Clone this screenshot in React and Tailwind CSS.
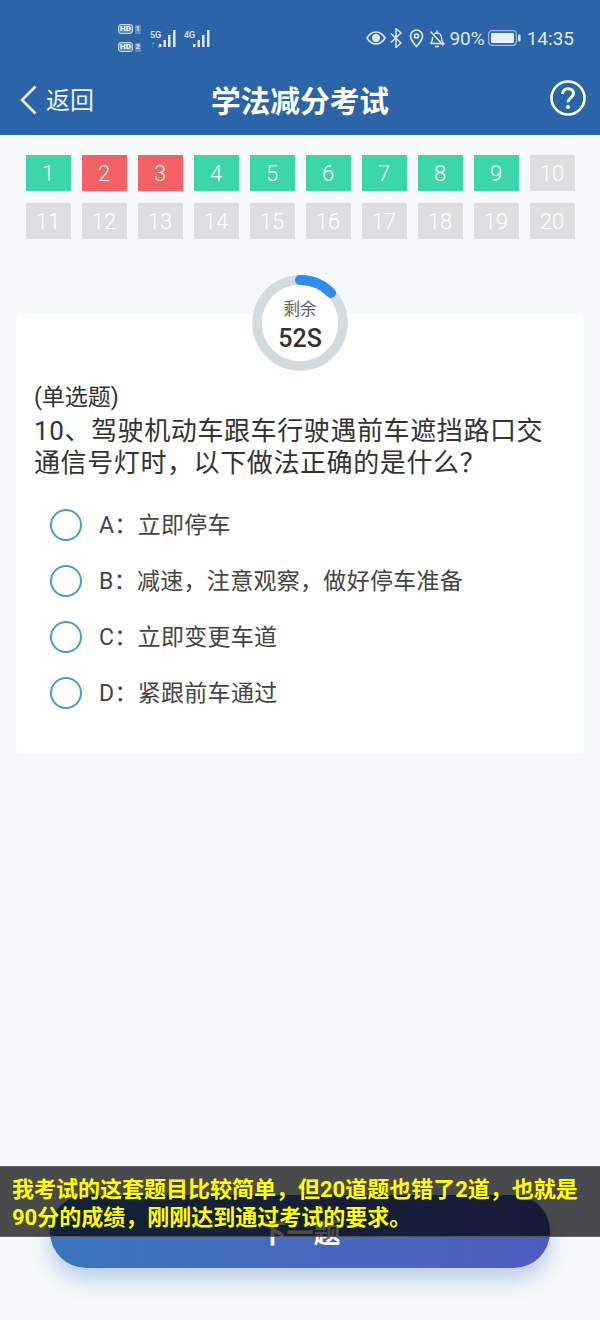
import React from "react";

const font = { fontFamily: '"Roboto", "Noto Sans CJK SC", sans-serif' };

const cells = [
  "ok", "bad", "bad", "ok", "ok", "ok", "ok", "ok", "ok", "idle",
  "idle", "idle", "idle", "idle", "idle", "idle", "idle", "idle", "idle", "idle",
];

const cellColors = {
  ok: "bg-[#3cd6ab]",
  bad: "bg-[#f46164]",
  idle: "bg-[#dbdfe0]",
};

const options = [
  ["A", "立即停车"],
  ["B", "减速，注意观察，做好停车准备"],
  ["C", "立即变更车道"],
  ["D", "紧跟前车通过"],
];

function Signal({ label, extra }) {
  return (
    <div className="relative h-[19px] w-[28px]">
      <span className="absolute left-0 top-0 text-[9px] font-medium leading-[10px] text-[#dfe8f3]">{label}</span>
      {extra && <span className="absolute left-0 top-[11px] text-[6px] leading-[8px] text-[#8fb0d6]">{extra}</span>}
      <svg width="19" height="19" viewBox="0 0 19 19" className="absolute right-0 top-0">
        <g fill="#dfe8f3">
          <rect x="0" y="14" width="2.500" height="3" />
          <rect x="4.500" y="10" width="2.500" height="7" />
          <rect x="9" y="5" width="2.500" height="12" />
          <rect x="14" y="0" width="2.500" height="17" />
        </g>
      </svg>
    </div>
  );
}

function HdBadge({ n }) {
  return (
    <div className="flex items-center gap-[2px]">
      <span className="rounded-[3px] border border-[#cfdcee] bg-[#5f8bc0] px-[1px] text-[8px] font-bold leading-[8px] text-white">HD</span>
      <span className="rounded-[1px] bg-[#5f8bc0] px-[1px] text-[7px] font-bold leading-[9px] text-[#e6edf6]">{n}</span>
    </div>
  );
}

function StatusBar() {
  return (
    <div className="flex h-[76px] items-center justify-between pl-[118px] pr-[26px] text-[#dfe8f3]">
      <div className="flex items-center gap-[9px]">
        <div className="flex flex-col gap-[8px]">
          <HdBadge n="1" />
          <HdBadge n="2" />
        </div>
        <div className="flex items-center gap-[6px] pt-[2px]">
          <Signal label="5G" extra="↑↓" />
          <Signal label="4G" />
        </div>
      </div>
      <div className="flex items-center text-[19px] leading-none">
        <svg width="20" height="16" viewBox="0 0 20 16" fill="none" stroke="currentColor" strokeWidth="1.6">
          <path d="M1 8c2.400-4 5.400-6 9-6s6.600 2 9 6c-2.400 4-5.400 6-9 6s-6.600-2-9-6z" />
          <circle cx="10" cy="8" r="3.200" fill="currentColor" />
        </svg>
        <svg width="12" height="20" viewBox="0 0 12 20" fill="none" stroke="currentColor" strokeWidth="1.500" className="ml-[4px]">
          <path d="M1 5.500l10 9.500-5 4.500V.5l5 4.500L1 14.500" />
        </svg>
        <svg width="15" height="19" viewBox="0 0 15 19" fill="none" stroke="currentColor" strokeWidth="1.700" className="ml-[7px]">
          <path d="M7.500 17.500C3.500 13 1.500 10 1.500 7a6 6 0 0 1 12 0c0 3-2 6-6 10.500z" />
          <circle cx="7.500" cy="7" r="2" />
        </svg>
        <svg width="16" height="19" viewBox="0 0 16 19" fill="none" stroke="currentColor" strokeWidth="1.500" className="ml-[5px]">
          <path d="M1.500 14.500h13c-1.500-1.500-2-3-2-5.500 0-2.800-1.800-5-4.500-5-1 0-2 .3-2.700.9M3.800 8c-.2.5-.3 1-.3 1.500 0 2.200-.7 3.700-2 5" />
          <path d="M8 1.500V4M6 17.500h4M1.500 2.500l13 14" />
        </svg>
        <span className="ml-[4px]">90%</span>
        <svg width="33" height="18" viewBox="0 0 33 18" className="ml-[3px]">
          <rect x="0.700" y="1.700" width="27.600" height="14.600" rx="3" fill="none" stroke="#9fbbdc" strokeWidth="1.200" />
          <rect x="3" y="4" width="23" height="10" rx="1" fill="#e8eff8" />
          <rect x="30" y="5.500" width="2.500" height="7" rx="1" fill="#dfe8f3" />
        </svg>
        <span className="ml-[6px]">14:35</span>
      </div>
    </div>
  );
}

function NavBar() {
  return (
    <div className="relative flex h-[48px] items-center justify-between pl-[20px] pr-[14px]">
      <div className="flex items-center gap-[9px] text-[#eef3f9]">
        <svg width="17" height="30" viewBox="0 0 17 30" fill="none" stroke="currentColor" strokeWidth="2.600">
          <path d="M15.500 1.500L2 15l13.500 13.500" />
        </svg>
        <span className="pt-[2px] text-[24px] leading-none">返回</span>
      </div>
      <span className="absolute inset-x-0 top-[11px] text-center text-[29.700px] font-bold leading-none text-white">学法减分考试</span>
      <svg width="36" height="36" viewBox="0 0 36 36" fill="none" stroke="#fff" strokeWidth="2.600" className="relative -top-[2px]">
        <circle cx="18" cy="18" r="16.500" />
        <path d="M12.500 14c0-3.200 2.400-5.300 5.600-5.300s5.400 2 5.400 4.800c0 4.500-5.500 4.300-5.500 8.700" strokeWidth="3" />
        <circle cx="18" cy="27" r="2" fill="#fff" stroke="none" />
      </svg>
    </div>
  );
}

function Timer() {
  return (
    <div className="relative z-10 -mb-[57px] mt-[36px] grid h-[96px] w-[96px] self-center">
      <svg width="96" height="96" viewBox="0 0 96 96" fill="none" className="[grid-area:1/1]">
        <circle cx="48" cy="48" r="43" fill="#fff" stroke="#d3dbdc" strokeWidth="9.500" />
        <path d="M48 5a43 43 0 0 1 31 13" stroke="#2e8dee" strokeWidth="10" strokeLinecap="round" />
      </svg>
      <div className="flex flex-col items-center pt-[25px] [grid-area:1/1]">
        <span className="text-[16.500px] leading-[20px] text-[#666]">剩余</span>
        <span className="mt-[5px] text-[25px] font-medium leading-[28px] text-[#333]">52S</span>
      </div>
    </div>
  );
}

export default function App() {
  return (
    <div className="relative flex h-[1320px] w-[600px] flex-col overflow-hidden bg-[#f5f9fa]" style={font}>
      <header className="h-[135px] bg-[#2b64a8] shrink-0">
        <StatusBar />
        <NavBar />
      </header>

      {/* answer sheet */}
      <div className="mt-[20px] grid grid-cols-[repeat(10,45px)] gap-x-[11px] gap-y-[12px] pl-[25.500px]">
        {cells.map((state, i) => (
          <div
            key={i}
            className={`flex h-[36px] items-center justify-center pt-[1px] text-[22px] font-light text-white ${cellColors[state]}`}
          >
            {i + 1}
          </div>
        ))}
      </div>

      <Timer />

      {/* question card */}
      <div className="mx-[16px] h-[440px] rounded-[5px] bg-white px-[18px] pt-[70px] text-[#333]">
        <div className="text-[23px] leading-[28px]">(单选题)</div>
        <div className="mt-[4px] text-[26px] leading-[31.500px] tracking-[0.600px]">
          10、驾驶机动车跟车行驶遇前车遮挡路口交通信号灯时，以下做法正确的是什么？
        </div>
        <div className="mt-[18px] flex flex-col pl-[16px]">
          {options.map(([key, text]) => (
            <div key={key} className="flex h-[56px] items-center">
              <span className="h-[32px] w-[32px] rounded-full border-2 border-[#4a9ae0]" />
              <span className="ml-[17px] text-[23px] leading-none tracking-[0.300px] text-[#444]">
                {key}：{text}
              </span>
            </div>
          ))}
        </div>
      </div>

      {/* next button */}
      <button className="mx-[50px] mb-[52px] mt-auto flex h-[73px] items-center justify-center rounded-[36px] bg-gradient-to-r from-[#3a75bd] to-[#4f5cbf] pt-[6px] text-[27px] font-bold text-white shadow-[0_12px_20px_rgba(60,110,190,0.3)]">
        下一题
      </button>

      {/* video subtitle */}
      <div className="absolute inset-x-0 top-[1166px] h-[71px] border-y border-[#777]/60 bg-black/70 px-[12px] pt-[9px] text-[22px] font-bold leading-[28px] text-[#ffff00]">
        我考试的这套题目比较简单，但20道题也错了2道，也就是
        <br />
        90分的成绩，刚刚达到通过考试的要求。
      </div>
    </div>
  );
}
